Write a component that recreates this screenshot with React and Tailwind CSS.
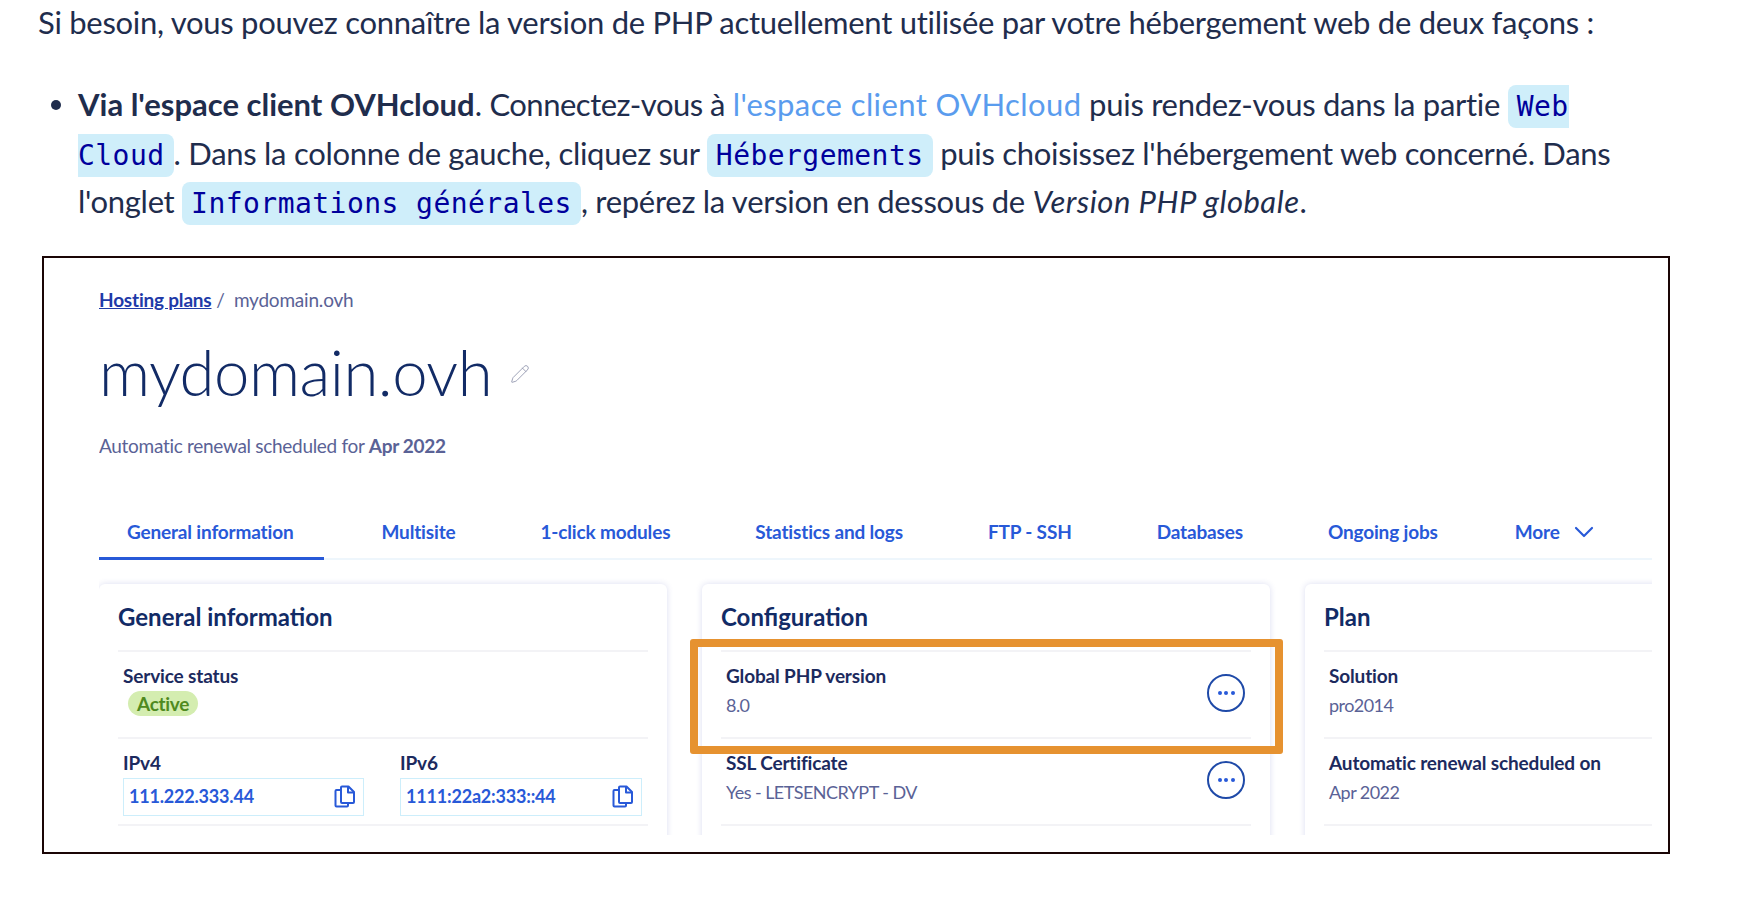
import { Pencil, ChevronDown } from 'lucide-react'

const SANS = 'font-["Lato","Noto_Sans",sans-serif]'

const tabs = ['General information', 'Multisite', '1-click modules', 'Statistics and logs', 'FTP - SSH', 'Databases', 'Ongoing jobs']

function Code({ children }) {
  return (
    <code className='rounded-[8px] bg-[#cfeefa] px-[9px] py-[5px] font-["DejaVu_Sans_Mono",monospace] text-[28px] leading-none tracking-[0.45px] text-[#00009c]'>
      {children}
    </code>
  )
}

function CopyIcon() {
  return (
    <svg width="22" height="23" viewBox="0 0 22 23" fill="none" stroke="#2859d8" strokeWidth="2" strokeLinejoin="round" className="shrink-0">
      <path d="M7 5H2.5a1 1 0 0 0-1 1v14.5a1 1 0 0 0 1 1H13a1 1 0 0 0 1-1V18" />
      <path d="M7 2.5a1 1 0 0 1 1-1h6.5L20 7v10a1 1 0 0 1-1 1H8a1 1 0 0 1-1-1z" />
      <path d="M14 1.5V7.5H20" />
    </svg>
  )
}

function MoreButton() {
  return (
    <span className="flex h-[38px] w-[38px] shrink-0 items-center justify-center gap-[2.5px] rounded-full border-2 border-[#1f4aa8]">
      <i className="h-[4px] w-[4px] rounded-full bg-[#2859d8]" />
      <i className="h-[4px] w-[4px] rounded-full bg-[#2859d8]" />
      <i className="h-[4px] w-[4px] rounded-full bg-[#2859d8]" />
    </span>
  )
}

function Row({ label, value, action }) {
  return (
    <div className="flex h-[87px] items-start justify-between border-b-2 border-[#f3f3f6] pl-[5px] pr-[6px] pt-[12px]">
      <div>
        <div className="text-[19px] leading-[24px] font-bold tracking-[-0.15px] whitespace-nowrap text-[#1c2a5e]">{label}</div>
        {value && <div className="mt-[5px] text-[18px] leading-[24px] tracking-[-0.55px] whitespace-nowrap text-[#5a6296]">{value}</div>}
      </div>
      {action && <div className="mt-[10px]"><MoreButton /></div>}
    </div>
  )
}

function IpField({ label, value, w }) {
  return (
    <div className={w}>
      <div className="text-[19px] leading-[24px] font-bold tracking-[-0.15px] text-[#1c2a5e]">{label}</div>
      <div className="mt-[3px] flex h-[38px] items-center justify-between border border-[#cdeefb] pl-[5px] pr-[7px]">
        <span className="text-[18px] font-bold tracking-[-0.2px] text-[#2859d8]">{value}</span>
        <CopyIcon />
      </div>
    </div>
  )
}

function Card({ title, children }) {
  return (
    <section className="h-[300px] w-[568px] shrink-0 rounded-[6px] bg-white px-[19px] shadow-[0_0_6px_rgba(60,70,180,0.18)]">
      <h3 className="flex h-[68px] items-center border-b-2 border-[#f3f3f6] text-[24px] font-bold text-[#122b66]">{title}</h3>
      {children}
    </section>
  )
}

export default function App() {
  return (
    <div className={`min-h-[904px] bg-white ${SANS} text-[#1f2d4d]`}>
      <p className="pl-[38px] pt-[3px] text-[31px] leading-[38px] tracking-[-0.28px] whitespace-nowrap">
        Si besoin, vous pouvez connaître la version de PHP actuellement utilisée par votre hébergement web de deux façons :
      </p>

      <ul className="mt-[39px] pl-[78px] text-[31px] leading-[48.5px] tracking-[-0.28px] whitespace-nowrap">
        <li className="relative">
          <span className="absolute left-[-27px] top-[20px] h-[10px] w-[10px] rounded-full bg-[#1f2d4d]" />
          <strong className="font-bold tracking-normal">Via l'espace client OVHcloud</strong>. <span className="tracking-[-0.5px]">Connectez-vous à</span> <a className="tracking-[0.4px] text-[#5a9cee]">l'espace client OVHcloud</a> puis rendez-vous dans la partie <Code>Web<br />Cloud</Code>. Dans la colonne de gauche, cliquez sur <Code>Hébergements</Code> puis choisissez l'hébergement web concerné. Dans<br />
          l'onglet <Code>Informations générales</Code>, repérez la version en dessous de <em className="tracking-[0.5px]">Version PHP globale</em>.
        </li>
      </ul>

      {/* capture d'écran du manager */}
      <figure className="relative ml-[42px] mt-[30px] h-[598px] w-[1628px] border-2 border-[#1a0505]">
        <div className="ml-[55px] mr-[16px] h-[577px] overflow-hidden pt-[30px]">
          <div className="text-[19px] leading-[24px] tracking-[-0.2px] text-[#5a6296]">
            <a className="font-bold text-[#1f3aa8] underline">Hosting plans</a> /&nbsp; mydomain.ovh
          </div>
          <h1 className="mt-[20px] flex items-center text-[63.5px] leading-[80px] font-light tracking-[-0.5px] text-[#122b66]">
            mydomain.ovh
            <Pencil size={20} strokeWidth={1} className="ml-[18px] mt-[4px] text-[#8a8fa8]" />
          </h1>
          <div className="mt-[22px] text-[19px] leading-[24px] tracking-[-0.3px] text-[#5a6296]">
            Automatic renewal scheduled for <b className="font-bold">Apr 2022</b>
          </div>

          <nav className="mt-[46px] flex h-[56px] items-stretch gap-[29px] border-b-2 border-[#eef6fc] text-[19px] font-bold tracking-[-0.16px] text-[#2859d8]">
            {tabs.map((t, i) => (
              <span
                key={t}
                className={`shrink-0 whitespace-nowrap pl-[28px] pt-[14px] ${i === 0 ? 'pr-[31px] -mb-[2px] border-b-[3px] border-[#2859d8]' : 'pr-[28px]'}`}
              >
                {t}
              </span>
            ))}
            <span className="-ml-[8px] flex items-start gap-[8px] pl-[28px] pt-[14px] whitespace-nowrap">
              More <ChevronDown size={32} strokeWidth={1.6} className="-mt-[2px]" />
            </span>
          </nav>

          <div className="mt-[24px] flex gap-[35px]">
            <Card title="General information">
              <div className="flex h-[87px] flex-col items-start border-b-2 border-[#f3f3f6] pl-[5px] pt-[12px]">
                <div className="text-[19px] leading-[24px] font-bold tracking-[-0.15px] text-[#1c2a5e]">Service status</div>
                <span className="ml-[5px] mt-[3px] rounded-full bg-[#d4edb0] px-[9px] text-[19px] leading-[25px] font-bold tracking-[-0.3px] text-[#4f8a1f]">Active</span>
              </div>
              <div className="flex h-[87px] gap-[36px] border-b-2 border-[#f3f3f6] pl-[5px] pt-[12px]">
                <IpField label="IPv4" value="111.222.333.44" w="w-[241px]" />
                <IpField label="IPv6" value="1111:22a2:333::44" w="w-[242px]" />
              </div>
            </Card>
            <Card title="Configuration">
              <Row label="Global PHP version" value="8.0" action />
              <Row label="SSL Certificate" value="Yes - LETSENCRYPT - DV" action />
            </Card>
            <Card title="Plan">
              <Row label="Solution" value="pro2014" />
              <Row label="Automatic renewal scheduled on" value="Apr 2022" />
            </Card>
          </div>
        </div>
        {/* encadré orange */}
        <div className="absolute left-[646px] top-[381px] h-[115px] w-[593px] rounded-[3px] border-[8px] border-[#e69230]" />
      </figure>
    </div>
  )
}
